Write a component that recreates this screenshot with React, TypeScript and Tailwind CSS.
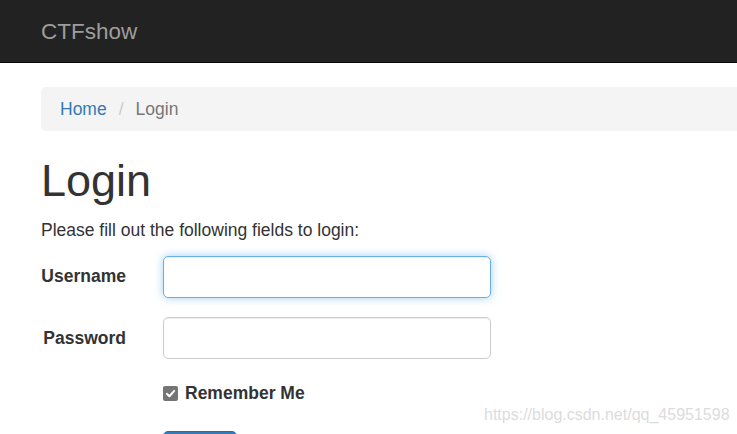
import React from "react";

export default function App() {
  return (
    <div
      className="relative w-[737px] h-[434px] overflow-hidden bg-white text-[#333] text-[17.5px] leading-[25px]"
      style={{ fontFamily: '"Liberation Sans", Arial, sans-serif' }}
    >
      <nav className="h-[63px] bg-[#222] border-b-[1.5px] border-[#080808] flex items-center pl-[41px]">
        <span className="text-[22.5px] leading-[25px] text-[#9d9d9d]">CTFshow</span>
      </nav>
      <div className="pl-[41px] pt-[24px]">
        <ol className="flex items-center h-[44px] bg-[#f4f4f4] rounded-l-[5px] pl-[19px]">
          <li className="text-[#337ab7]">Home</li>
          <li className="text-[#ccc] px-[12px]">/</li>
          <li className="text-[#777]">Login</li>
        </ol>
        <h1 className="mt-[25px] text-[45px] leading-[49.5px] font-normal text-[#333]">Login</h1>
        <p className="mt-[12px]">Please fill out the following fields to login:</p>
        <form className="mt-[13px]">
          <div className="flex items-center h-[42px]">
            <label className="w-[85px] text-right font-bold">Username</label>
            <input
              className="ml-[37px] w-[328px] h-[42px] rounded-[5px] border border-[#66afe9] outline-none px-[15px] shadow-[inset_0_1px_1px_rgba(0,0,0,0.075),0_0_8px_rgba(102,175,233,0.6)]"
              type="text"
            />
          </div>
          <div className="flex items-center h-[42px] mt-[19px]">
            <label className="w-[85px] text-right font-bold pt-[2px]">Password</label>
            <input
              className="ml-[37px] w-[328px] h-[42px] rounded-[5px] border border-[#ccc] outline-none px-[15px] shadow-[inset_0_1px_1px_rgba(0,0,0,0.075)]"
              type="password"
            />
          </div>
          <div className="flex items-center ml-[122px] mt-[25px] h-[20px]">
            <span className="w-[15px] h-[15px] rounded-[2px] bg-[#757575] flex items-center justify-center">
              <svg width="11" height="11" viewBox="0 0 12 12">
                <path d="M2 6.3 L4.8 9 L10 3.2" stroke="white" strokeWidth="2.2" fill="none" strokeLinecap="round" strokeLinejoin="round" />
              </svg>
            </span>
            <span className="ml-[7px] font-bold">Remember Me</span>
          </div>
          <div className="ml-[122px] mt-[27px]">
            <button
              type="button"
              aria-label="Login"
              className="block w-[74px] h-[42px] rounded-[5px] bg-[#337ab7] border border-[#2e6da4]"
            />
          </div>
        </form>
      </div>
      <div className="absolute left-[484px] top-[405px] text-[16px] leading-[20px] text-[#dcdcdc]">
        https://blog.csdn.net/qq_45951598
      </div>
    </div>
  );
}
